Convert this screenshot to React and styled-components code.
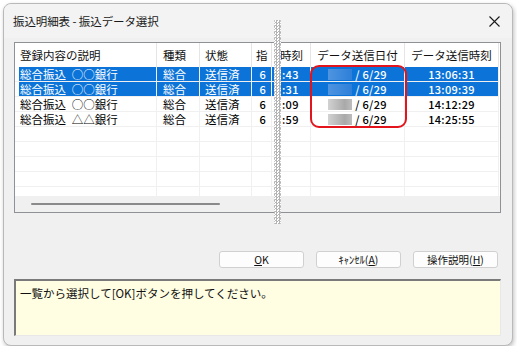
import React from "react";
import styled, { createGlobalStyle } from "styled-components";

const GlobalStyle = createGlobalStyle`
  html, body {
    margin: 0;
    padding: 0;
    background: #ffffff;
  }
  body {
    font-family: "Noto Sans CJK JP", "Noto Sans", sans-serif;
    color: #000;
  }
`;

const rows = [
  { desc: "総合振込\u2002○○銀行", kind: "総合", state: "送信済", shi: "6", time: ":43", date: "/ 6/29", sent: "13:06:31", selected: true },
  { desc: "総合振込\u2002○○銀行", kind: "総合", state: "送信済", shi: "6", time: ":31", date: "/ 6/29", sent: "13:09:39", selected: true },
  { desc: "総合振込\u2002○○銀行", kind: "総合", state: "送信済", shi: "6", time: ":09", date: "/ 6/29", sent: "14:12:29" },
  { desc: "総合振込\u2002△△銀行", kind: "総合", state: "送信済", shi: "6", time: ":59", date: "/ 6/29", sent: "14:25:55" },
];

const emptyRows = 5;

const App = () => {
  return (
    <>
      <GlobalStyle />
      <Window>
        <TitleBar>
          <Title>振込明細表 - 振込データ選択</Title>
          <CloseButton aria-label="close">
            <svg width="11" height="11" viewBox="0 0 11 11">
              <path d="M0.5 0.5 L10.5 10.5 M10.5 0.5 L0.5 10.5" stroke="#1a1a1a" strokeWidth="1.1" />
            </svg>
          </CloseButton>
        </TitleBar>

        <Body>
          <ListBox>
            <TableArea>
              <Table>
                <colgroup>
                  <col style={{ width: 142 }} />
                  <col style={{ width: 43 }} />
                  <col style={{ width: 52 }} />
                  <col style={{ width: 20 }} />
                  <col style={{ width: 39 }} />
                  <col style={{ width: 94 }} />
                  <col style={{ width: 94 }} />
                </colgroup>
                <thead>
                  <tr>
                    <Th $pad="5px">登録内容の説明</Th>
                    <Th $pad="6px">種類</Th>
                    <Th $pad="5px">状態</Th>
                    <Th $pad="4px">指</Th>
                    <Th $pad="8px">時刻</Th>
                    <Th $align="center">データ送信日付</Th>
                    <Th $align="center">データ送信時刻</Th>
                  </tr>
                </thead>
                <tbody>
                  {rows.map((r, i) => (
                    <Row key={i} $selected={r.selected}>
                      <FirstCell $selected={r.selected}>{r.desc}</FirstCell>
                      <Td $pad="6px">{r.kind}</Td>
                      <Td $pad="5px">{r.state}</Td>
                      <Td $align="right" $padRight="5px" $num>{r.shi}</Td>
                      <Td $pad="10px" $num>{r.time}</Td>
                      <Td $align="center" $num>
                        <Redacted $selected={r.selected} />
                        {r.date}
                      </Td>
                      <Td $align="center" $num>{r.sent}</Td>
                    </Row>
                  ))}
                  {Array.from({ length: emptyRows }).map((_, i) => (
                    <Row key={"e" + i}>
                      <FirstCell />
                      <Td />
                      <Td />
                      <Td />
                      <Td />
                      <Td />
                      <Td />
                    </Row>
                  ))}
                </tbody>
              </Table>
            </TableArea>
            <HScroll>
              <Thumb />
            </HScroll>
            <Highlight />
          </ListBox>

          <ButtonRow>
            <Button>
              <u>O</u>K
            </Button>
            <Button>
              ｷｬﾝｾﾙ(<u>A</u>)
            </Button>
            <Button>
              操作説明(<u>H</u>)
            </Button>
          </ButtonRow>

          <Message>一覧から選択して[OK]ボタンを押してください。</Message>
        </Body>

        <CutMark />
      </Window>
    </>
  );
};

export default App;

const Window = styled.div`
  position: relative;
  margin: 3px 0 0 3px;
  width: 508px;
  height: 341px;
  background: #f0f0f0;
  border: 1px solid #b9b9b9;
  border-radius: 8px;
  box-shadow: 1px 2px 4px rgba(0, 0, 0, 0.25);
  display: flex;
  flex-direction: column;
`;

const TitleBar = styled.div`
  height: 34px;
  display: flex;
  align-items: center;
  justify-content: space-between;
  padding: 0 8px 0 9px;
  background: #f3f3f3;
  border-radius: 8px 8px 0 0;
`;

const Title = styled.div`
  font-size: 11.5px;
  color: #1a1a1a;
  letter-spacing: -0.1px;
`;

const CloseButton = styled.div`
  width: 20px;
  height: 20px;
  display: flex;
  align-items: center;
  justify-content: center;
`;

const Body = styled.div`
  flex: 1;
  display: flex;
  flex-direction: column;
  padding: 4px 11px 0 10px;
`;

const ListBox = styled.div`
  position: relative;
  height: 169px;
  border: 1px solid #8e9196;
  background: #ffffff;
  display: flex;
  flex-direction: column;
`;

const TableArea = styled.div`
  flex: 1;
  overflow: hidden;
`;

const Table = styled.table`
  table-layout: fixed;
  border-collapse: separate;
  border-spacing: 0;
  width: 484px;
  font-size: 11.5px;
  line-height: 14px;
`;

const Th = styled.th`
  height: 24px;
  padding: 0 0 0 ${(p) => p.$pad || "0"};
  text-align: ${(p) => p.$align || "left"};
  font-weight: normal;
  white-space: nowrap;
  overflow: hidden;
  border-right: 1px solid #e5e5e5;
  color: #111;
`;

const Row = styled.tr`
  height: 15px;
  background: ${(p) => (p.$selected ? "#0c74d8" : "transparent")};
  color: ${(p) => (p.$selected ? "#ffffff" : "#000000")};
`;

const Td = styled.td`
  height: 14px;
  padding: 0 ${(p) => p.$padRight || "0"} 0 ${(p) => p.$pad || "0"};
  text-align: ${(p) => p.$align || "left"};
  white-space: nowrap;
  overflow: hidden;
  border-right: 1px solid #f0f0f0;
  border-bottom: 1px solid #f0f0f0;
  font-size: ${(p) => (p.$num ? "11px" : "inherit")};
  font-weight: ${(p) => (p.$num ? 500 : "normal")};
  letter-spacing: ${(p) => (p.$num ? "0.3px" : "normal")};
`;

const FirstCell = styled(Td)`
  padding-left: 5px;
  background: ${(p) => (p.$selected ? "#0c74d8" : "#ffffff")};
  box-shadow: inset 4px 0 0 #ffffff;
`;

const Redacted = styled.span`
  display: inline-block;
  vertical-align: -1px;
  width: 24px;
  height: 11px;
  margin-right: 3px;
  background: ${(p) =>
    p.$selected
      ? "linear-gradient(90deg, #4f94df, #3786dc 70%, #2f7fd8)"
      : "linear-gradient(90deg, #d2d2d2, #a9a9a9 70%, #bdbdbd)"};
`;

const HScroll = styled.div`
  height: 16px;
  background: #f0f0f0;
  display: flex;
  align-items: center;
  padding-left: 16px;
`;

const Thumb = styled.div`
  width: 189px;
  height: 2px;
  border-radius: 1px;
  background: #8a8a8a;
`;

const Highlight = styled.div`
  position: absolute;
  left: 295px;
  top: 22px;
  width: 93px;
  height: 59px;
  border: 2.5px solid #e3141b;
  border-radius: 9px;
  pointer-events: none;
`;

const ButtonRow = styled.div`
  display: flex;
  justify-content: flex-end;
  gap: 12px;
  margin-top: 38px;
  padding-right: 3px;
`;

const Button = styled.div`
  width: 83px;
  height: 15px;
  background: #fdfdfd;
  border: 1px solid #d0d0d0;
  border-radius: 3px;
  display: flex;
  align-items: center;
  justify-content: center;
  font-size: 10.5px;
  color: #111;
  u {
    text-underline-offset: 1px;
  }
`;

const Message = styled.div`
  margin-top: 11px;
  height: 50px;
  background: #fffde2;
  border-top: 2px solid #7a7a7a;
  border-left: 2px solid #7a7a7a;
  border-right: 1px solid #e8e8e8;
  border-bottom: 1px solid #e8e8e8;
  padding: 4px 0 0 4px;
  font-size: 11.5px;
  line-height: 16px;
  color: #111;
`;

const CutMark = styled.div`
  position: absolute;
  left: 270px;
  top: 16px;
  width: 5px;
  height: 204px;
  background: repeating-conic-gradient(#b4b4b4 0 25%, #ffffff 0 50%) 0 0 / 3px 3px;
  border-left: 1px dotted #c8c8c8;
  border-right: 1px dotted #c8c8c8;
`;
